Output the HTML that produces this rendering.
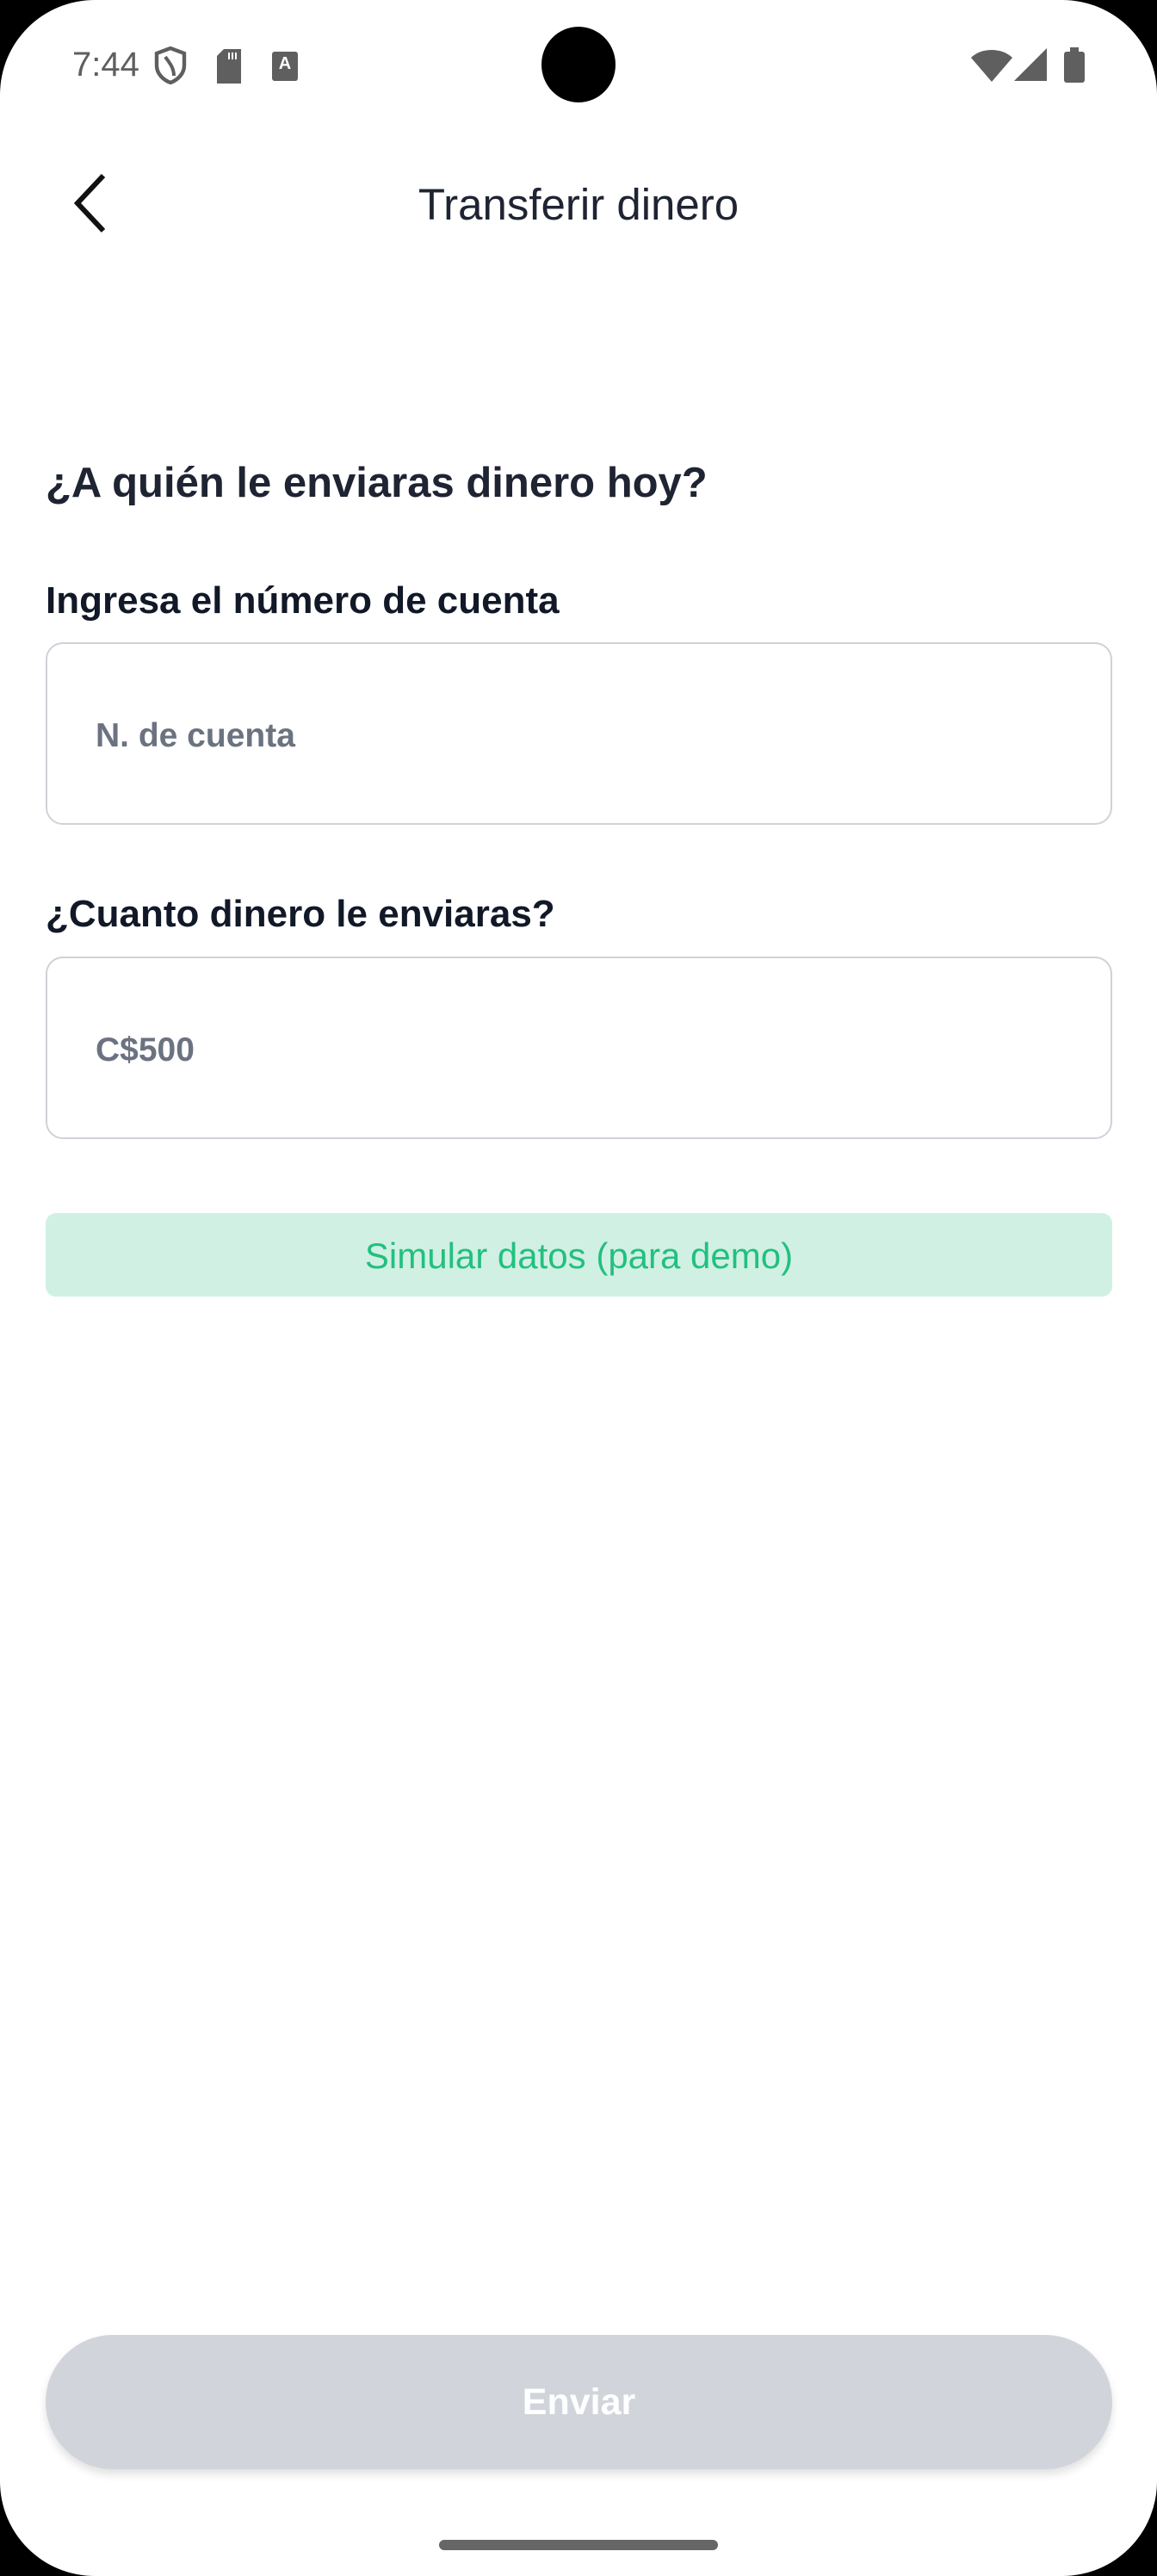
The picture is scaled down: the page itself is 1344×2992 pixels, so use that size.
<!DOCTYPE html>
<html><head><meta charset="utf-8"><style>
html,body{margin:0;padding:0;background:#000;}
body{width:1344px;height:2992px;position:relative;overflow:hidden;font-family:"Liberation Sans",sans-serif;}
.screen{position:absolute;left:0;top:0;width:1344px;height:2992px;background:#fff;border-radius:110px;}
.abs{position:absolute;}
.t{white-space:nowrap;}
.input{position:absolute;left:53px;width:1239px;height:212px;border:2px solid #d1d1d9;border-radius:20px;box-sizing:border-box;}
.ph{position:absolute;left:56px;top:3px;line-height:208px;font-size:39px;color:#6b7280;font-weight:bold;}
</style></head><body>
<div class="screen">
  <div class="abs t" style="left:84px;top:53px;font-size:40px;color:#5f5f5f;">7:44</div>
  <svg class="abs" style="left:178px;top:54px" width="40" height="44" viewBox="0 0 20 22"><path d="M10 1 L18 4 V11 C18 16 14 19.5 10 21 C6 19.5 2 16 2 11 V4 Z" fill="none" stroke="#5f5f5f" stroke-width="2.2"/><path d="M7 6 C9 9 12 12 12 17" fill="none" stroke="#5f5f5f" stroke-width="2"/></svg>
  <svg class="abs" style="left:250px;top:57px" width="32" height="40" viewBox="0 0 16 20"><path d="M5 0 H15 V20 H1 V4 Z" fill="#5f5f5f"/><path d="M8 2 V6 M10 2 V6 M12 2 V6" stroke="#fff" stroke-width="1"/></svg>
  <div class="abs" style="left:316px;top:60px;width:30px;height:34px;background:#5f5f5f;border-radius:3px;color:#fff;font-size:20px;font-weight:bold;text-align:center;line-height:28px;">A</div>
  <div class="abs" style="left:629px;top:31px;width:86px;height:88px;border-radius:50%;background:#000;"></div>
  <svg class="abs" style="left:1128px;top:55px" width="48" height="40" viewBox="0 0 24 20"><path d="M0 6 C6 0 18 0 24 6 L12 20 Z" fill="#5f5f5f"/></svg>
  <svg class="abs" style="left:1178px;top:56px" width="38" height="38" viewBox="0 0 19 19"><path d="M19 0 V19 H0 Z" fill="#5f5f5f"/></svg>
  <div class="abs" style="left:1236px;top:60px;width:24px;height:36px;background:#5f5f5f;border-radius:3px;"></div>
  <div class="abs" style="left:1243px;top:55px;width:10px;height:6px;background:#5f5f5f;"></div>

  <svg class="abs" style="left:80px;top:200px" width="50" height="72" viewBox="0 0 50 72"><path d="M40 4 L10 36 L40 68" fill="none" stroke="#111" stroke-width="6"/></svg>
  <div class="abs t" style="left:0;width:1344px;text-align:center;top:208px;font-size:51px;color:#1f2433;">Transferir dinero</div>

  <div class="abs t" style="left:53px;top:533px;font-size:49px;color:#1f2433;font-weight:bold;">¿A quién le enviaras dinero hoy?</div>

  <div class="abs t" style="left:53px;top:673px;font-size:44px;color:#111827;font-weight:bold;">Ingresa el número de cuenta</div>
  <div class="input" style="top:746px;"><div class="ph t">N. de cuenta</div></div>

  <div class="abs t" style="left:53px;top:1037px;font-size:44px;color:#111827;font-weight:bold;">¿Cuanto dinero le enviaras?</div>
  <div class="input" style="top:1111px;"><div class="ph t">C$500</div></div>

  <div class="abs t" style="left:53px;top:1409px;width:1239px;height:97px;background:#d1f0e4;border-radius:12px;text-align:center;line-height:99px;font-size:42px;color:#22c07f;">Simular datos (para demo)</div>

  <div class="abs t" style="left:53px;top:2712px;width:1239px;height:156px;background:#d1d5db;border-radius:78px;text-align:center;line-height:156px;font-size:43px;color:#fff;font-weight:bold;box-shadow:0 6px 10px rgba(0,0,0,0.12);">Enviar</div>

  <div class="abs" style="left:510px;top:2950px;width:324px;height:12px;background:#666;border-radius:6px;"></div>
</div>
</body></html>
